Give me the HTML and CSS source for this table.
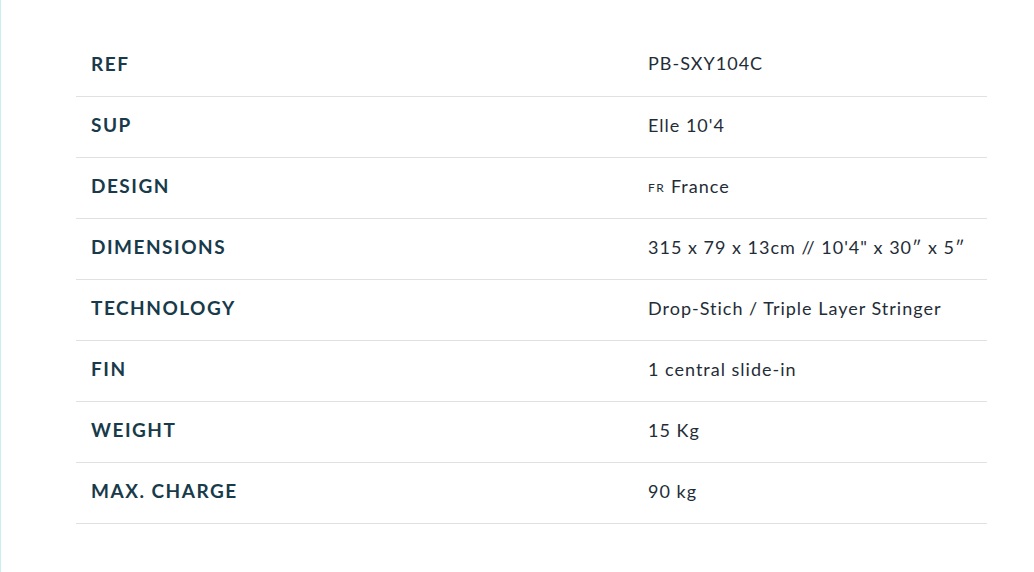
FILE: index.html
```html
<!DOCTYPE html>
<html lang="en">
<head>
<meta charset="utf-8">
<title>Specs</title>
<link rel="stylesheet" href="styles.css">
</head>
<body>
<div class="page">
  <table class="specs">
    <tbody>
      <tr><th>REF</th><td>PB-SXY104C</td></tr>
      <tr><th>SUP</th><td>Elle 10'4</td></tr>
      <tr><th>DESIGN</th><td><span class="flag">FR</span> France</td></tr>
      <tr><th>DIMENSIONS</th><td>315 x 79 x 13cm // 10'4" x 30″ x 5″</td></tr>
      <tr><th>TECHNOLOGY</th><td>Drop-Stich / Triple Layer Stringer</td></tr>
      <tr><th>FIN</th><td>1 central slide-in</td></tr>
      <tr><th>WEIGHT</th><td>15 Kg</td></tr>
      <tr><th>MAX. CHARGE</th><td>90 kg</td></tr>
    </tbody>
  </table>
</div>
</body>
</html>
```
FILE: styles.css
```css
html, body {
  margin: 0;
  padding: 0;
  background: #ffffff;
}
body {
  border-left: 1px solid #cdeef0;
  min-height: 572px;
  box-sizing: border-box;
}
.page {
  padding: 35px 0 0 75px;
}
.specs {
  width: 911px;
  border-collapse: collapse;
  table-layout: fixed;
  font-family: "Lato", "Liberation Sans", sans-serif;
}
.specs tr {
  border-bottom: 1px solid #e1e1e4;
  height: 61px;
}
.specs th {
  text-align: left;
  width: 527px;
  padding: 0 15px 4px;
  font-size: 19px;
  font-weight: 700;
  color: #183a4a;
  letter-spacing: 1.5px;
  vertical-align: middle;
  white-space: nowrap;
}
.specs td {
  padding: 0 15px 4px;
  font-size: 18px;
  color: #1f2d38;
  letter-spacing: 1px;
  vertical-align: middle;
  white-space: nowrap;
}
.flag {
  font-size: 12px;
  letter-spacing: 1.5px;
  vertical-align: 1px;
}
```
